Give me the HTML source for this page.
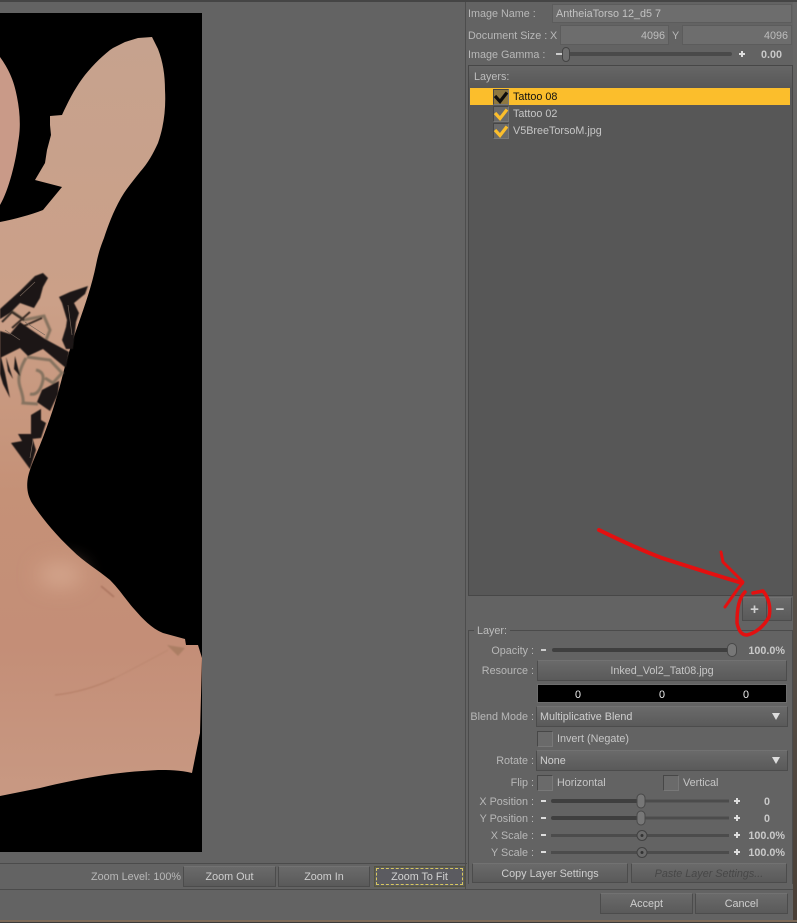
<!DOCTYPE html>
<html><head><meta charset="utf-8"><style>
html,body{margin:0;padding:0;background:#636363;}
#r{position:relative;width:797px;height:923px;overflow:hidden;background:#636363;font:10.8px/16px "Liberation Sans",sans-serif;color:#c6c6c6;}
#r div{position:absolute;box-sizing:border-box;white-space:nowrap;}
#r div.l,#r div.v,#r div.t{margin-top:1px;}
.l{text-align:right;color:#b8b8b8;}
.f{background:#6d6d6d;border:1px solid #5c5c5c;color:#bdbdbd;padding-top:1px;}
.b{background:linear-gradient(#6a6a6a,#5a5a5a);border:1px solid #4c4c4c;border-top-color:#727272;text-align:center;color:#cfcfcf;padding-top:1px;}
.d{background:linear-gradient(#6a6a6a,#5a5a5a);border:1px solid #4c4c4c;border-top-color:#727272;padding-left:3px;color:#cfcfcf;padding-top:1px;}
.c{width:16px;height:16px;background:#6a6a6a;border:1px solid #474747;border-right-color:#787878;border-bottom-color:#787878;}
.v{text-align:right;font-weight:bold;color:#c9c9c9;}
</style></head><body><div id="r">
<div style="left:0;top:0;width:797px;height:2px;background:#454545"></div>
<div style="left:0;top:13px;width:202px;height:839px;background:#000"></div>
<svg style="position:absolute;left:0;top:0" width="210" height="860" viewBox="0 0 210 860">
<defs>
<linearGradient id="g" gradientUnits="userSpaceOnUse" x1="0" y1="30" x2="0" y2="800"><stop offset="0" stop-color="#c6a28e"/><stop offset=".35" stop-color="#cba088"/><stop offset=".6" stop-color="#c59177"/><stop offset=".8" stop-color="#c48e77"/><stop offset="1" stop-color="#c89983"/></linearGradient>
<filter id="bl" x="-100%" y="-100%" width="300%" height="300%"><feGaussianBlur stdDeviation="10"/></filter>
<filter id="b1" x="-50%" y="-50%" width="200%" height="200%"><feGaussianBlur stdDeviation=".9"/></filter>
<filter id="b5" x="-10%" y="-10%" width="120%" height="120%"><feGaussianBlur stdDeviation=".5"/></filter>
</defs>
<path fill="url(#g)" d="M152 37L158 49C163 62 165 75 165 90C166 108 164 126 158 143C153 154 148 163 140 172C133 181 126 189 121 198C113 212 108 226 104 238C100 248 98 255 96 265C92 285 85 305 78 325C72 342 67 358 62 378C57 398 50 420 40 445C35 457 30 468 28 477C26 488 28 496 32 503C42 518 55 534 72 550C84 562 98 570 110 580C120 590 126 600 135 610C143 619 151 628 163 633L185 639L186 645L198 645L202 658L200 733L192 773C180 770 168 770 158 770C140 771 125 772 105 775C85 778 60 783 40 788L0 796V222C15 219 30 215 43 210L62 187L35 180L45 163L47 150L51 135L50 125L50 116L62 115C68 102 74 90 82 79C90 68 100 58 110 50L113 48L125 42L138 38Z"/>
<path fill="#c99a88" d="M0 57C8 68 14 80 17 97C20 112 21 128 18 143C16 160 9 190 0 205Z"/>
<ellipse cx="60" cy="575" rx="22" ry="12" fill="#d4a68d" filter="url(#bl)"/>
<path d="M55 695Q85 692 115 678" fill="none" stroke="#b47e66" stroke-width="1.200" filter="url(#b1)"/>
<path d="M115 678Q135 668 168 650" fill="none" stroke="#bb8770" stroke-width="1" filter="url(#b1)"/>
<path d="M101 586L114 597" stroke="#ac7660" stroke-width="1.800" filter="url(#b1)"/>
<path d="M167 645L185 648L178 656Z" fill="#ab7e64" filter="url(#b1)"/>
<g fill="none" stroke="#85725f" stroke-width="3" filter="url(#b1)">
<path d="M10 310L24 320L44 316L50 330L46 340"/>
<path d="M27 357L50 360L62 373L53 383L45 378"/>
<path d="M26 358Q16 375 20 387T23 403L38 404"/>
<path d="M36 370Q46 372 42 384T30 394"/>
</g>
<path d="M2 322L12 312L24 320M12 328L30 312M24 326L42 318" stroke="#3a2e28" stroke-width="2" fill="none" filter="url(#b5)"/>
<g fill="#1b1614" filter="url(#b5)">
<path d="M0 309L20 291L35 276L43 273L48 278L43 287L40 298L34 308L20 303L10 313L0 319Z"/>
<path d="M59 297L70 292L88 286L85 294L74 303L79 313L76 322L73 349L66 349L62 340L66 327L67 320L62 303Z"/>
<path d="M0 331L10 334L20 322L30 329L45 339L69 352L66 368L55 359L43 349L28 356L20 348L10 353L0 358Z"/>
<path d="M0 353L5 373L10 398L3 384L0 374Z"/>
<path d="M6 357L13 379L8 371Z"/>
<path d="M15 356L20 376L14 369Z"/>
<path d="M42 390L59 381L58 394L50 411L37 402Z"/>
<path d="M31 415L41 409L41 420L46 423L41 438L31 439Z"/>
<path d="M18 434L31 434L36 450L30 469L11 443L22 441Z"/>
</g>
<path d="M5 330L20 340M25 322L45 335M20 296L35 282M68 305L72 335M33 440L30 458" stroke="#75655a" stroke-width=".7" fill="none"/>
</svg>
<div style="left:0;top:863px;width:467px;height:1px;background:#4b4b4b"></div>
<div style="left:0;top:889px;width:467px;height:1px;background:#4b4b4b"></div>
<div style="left:465px;top:2px;width:1px;height:887px;background:#4d4d4d"></div>
<div class="l" style="left:91px;top:868px;width:90px">Zoom Level: 100%</div>
<div class="b" style="left:183px;top:866px;width:93px;height:21px;line-height:19px">Zoom Out</div>
<div class="b" style="left:278px;top:866px;width:92px;height:21px;line-height:19px">Zoom In</div>
<div class="b" style="left:374px;top:866px;width:91px;height:21px;background:#5b5b60;border-color:#55553f"></div>
<div style="left:376px;top:868px;width:87px;height:17px;border:1px dashed #d8c860;text-align:center;line-height:17px;color:#d2d2d2">Zoom To Fit</div>
<div class="l" style="left:468px;top:5px;text-align:left">Image Name :</div>
<div class="f" style="left:552px;top:4px;width:240px;height:19px;line-height:17px;padding-left:3px;color:#c2c2c2">AntheiaTorso 12_d5 7</div>
<div class="l" style="left:468px;top:27px;text-align:left">Document Size :</div>
<div class="l" style="left:550px;top:27px;text-align:left">X</div>
<div class="f" style="left:560px;top:25px;width:109px;height:20px;line-height:18px;text-align:right;padding-right:3px">4096</div>
<div class="l" style="left:672px;top:27px;text-align:left">Y</div>
<div class="f" style="left:682px;top:25px;width:110px;height:20px;line-height:18px;text-align:right;padding-right:3px">4096</div>
<div class="l" style="left:468px;top:46px;text-align:left">Image Gamma :</div>
<div style="left:556px;top:53px;width:6px;height:2px;background:#ccc"></div>
<div style="left:562px;top:52px;width:170px;height:4px;background:#4a4a4a;border-radius:2px"></div>
<div style="left:562px;top:47px;width:8px;height:15px;background:#6e6e6e;border:1px solid #444;border-radius:4px"></div>
<div style="left:739px;top:53px;width:6px;height:2px;background:#ddd"></div>
<div style="left:741px;top:51px;width:2px;height:6px;background:#ddd"></div>
<div class="v" style="left:740px;top:46px;width:42px">0.00</div>
<div style="left:468px;top:65px;width:325px;height:531px;background:#575757;border:1px solid #474747"></div>
<div style="left:469px;top:66px;width:323px;height:21px;background:linear-gradient(#666,#585858);line-height:22px;padding-left:5px;color:#bdbdbd">Layers:</div>
<div style="left:470px;top:88px;width:320px;height:17px;background:#fbbe2c"></div>
<div class="t" style="left:513px;top:88px;color:#111">Tattoo 08</div>
<div class="t" style="left:513px;top:105px;color:#c6c6c6">Tattoo 02</div>
<div class="t" style="left:513px;top:122px;color:#c6c6c6">V5BreeTorsoM.jpg</div>
<div class="c" style="left:493px;top:89px;background:#8d7740"></div>
<div class="c" style="left:493px;top:106px"></div>
<div class="c" style="left:493px;top:123px"></div>
<svg style="position:absolute;left:490px;top:86px" width="24" height="54" viewBox="0 0 24 54" fill="none" stroke-width="3.200">
<path d="M5 10L10 15.500L17 6.500" stroke="#0d0d0d"/><path d="M5 27L10 32.500L17 23.500" stroke="#fbbe2c"/><path d="M5 44L10 49.500L17 40.500" stroke="#fbbe2c"/>
</svg>
<div class="b" style="left:742px;top:597px;width:25px;height:24px;line-height:22px;font-size:15px;font-weight:bold">+</div>
<div class="b" style="left:768px;top:597px;width:24px;height:24px;line-height:22px;font-size:15px;font-weight:bold">−</div>
<div style="left:468px;top:630px;width:325px;height:254px;border:1px solid #4b4b4b;border-bottom:0"></div>
<div class="t" style="left:474px;top:622px;padding:0 3px;background:#636363;color:#bdbdbd">Layer:</div>
<div class="l" style="left:470px;top:642px;width:64px">Opacity :</div>
<div style="left:541px;top:649px;width:5px;height:2px;background:#ccc"></div>
<div style="left:552px;top:648px;width:180px;height:4px;background:#3f3f3f;border-radius:2px"></div>
<div style="left:727px;top:643px;width:10px;height:14px;background:#777;border:1px solid #484848;border-radius:5px"></div>
<div class="v" style="left:740px;top:642px;width:45px">100.0%</div>
<div class="l" style="left:470px;top:662px;width:64px">Resource :</div>
<div class="b" style="left:537px;top:660px;width:250px;height:21px;line-height:19px;color:#c6c6c6">Inked_Vol2_Tat08.jpg</div>
<div style="left:537px;top:684px;width:250px;height:19px;background:#000;border:1px solid #6e6e6e"></div>
<div class="t" style="left:575px;top:686px;color:#eee">0</div>
<div class="t" style="left:659px;top:686px;color:#eee">0</div>
<div class="t" style="left:743px;top:686px;color:#eee">0</div>
<div class="l" style="left:470px;top:708px;width:64px">Blend Mode :</div>
<div class="d" style="left:536px;top:706px;width:252px;height:21px;line-height:19px">Multiplicative Blend</div>
<div style="left:772px;top:713px;border:4px solid transparent;border-top:7px solid #ddd;border-bottom:0"></div>
<div class="c" style="left:537px;top:731px"></div>
<div class="t" style="left:557px;top:730px">Invert (Negate)</div>
<div class="l" style="left:470px;top:752px;width:64px">Rotate :</div>
<div class="d" style="left:536px;top:750px;width:252px;height:21px;line-height:19px">None</div>
<div style="left:772px;top:757px;border:4px solid transparent;border-top:7px solid #ddd;border-bottom:0"></div>
<div class="l" style="left:470px;top:774px;width:64px">Flip :</div>
<div class="c" style="left:537px;top:775px"></div>
<div class="t" style="left:557px;top:774px">Horizontal</div>
<div class="c" style="left:663px;top:775px"></div>
<div class="t" style="left:683px;top:774px">Vertical</div>
<div class="l" style="left:470px;top:793px;width:64px">X Position :</div>
<div class="l" style="left:470px;top:810px;width:64px">Y Position :</div>
<div class="l" style="left:470px;top:827px;width:64px">X Scale :</div>
<div class="l" style="left:470px;top:844px;width:64px">Y Scale :</div>
<svg style="position:absolute;left:535px;top:790px" width="210" height="72" viewBox="0 0 210 72">
<g fill="#ddd"><rect x="6" y="10" width="5" height="2"/><rect x="6" y="27" width="5" height="2"/><rect x="6" y="44" width="5" height="2"/><rect x="6" y="61" width="5" height="2"/>
<path d="M199 10h2v-2h2v2h2v2h-2v2h-2v-2h-2zM199 27h2v-2h2v2h2v2h-2v2h-2v-2h-2zM199 44h2v-2h2v2h2v2h-2v2h-2v-2h-2zM199 61h2v-2h2v2h2v2h-2v2h-2v-2h-2z"/></g>
<rect x="16" y="9" width="90" height="4" rx="2" fill="#3f3f3f"/><rect x="106" y="9.500" width="88" height="3" fill="#4c4c4c"/>
<rect x="16" y="26" width="90" height="4" rx="2" fill="#3f3f3f"/><rect x="106" y="26.500" width="88" height="3" fill="#4c4c4c"/>
<rect x="16" y="44" width="178" height="3" fill="#4c4c4c"/><rect x="16" y="61" width="178" height="3" fill="#4c4c4c"/>
<rect x="102" y="4" width="8" height="14" rx="4" fill="#777" stroke="#484848"/><rect x="102" y="21" width="8" height="14" rx="4" fill="#777" stroke="#484848"/>
<circle cx="107" cy="45.500" r="5" fill="#6a6a6a" stroke="#404040"/><circle cx="107" cy="45.500" r="1.500" fill="#333"/>
<circle cx="107" cy="62.500" r="5" fill="#6a6a6a" stroke="#404040"/><circle cx="107" cy="62.500" r="1.500" fill="#333"/>
</svg>
<div class="v" style="left:740px;top:793px;width:30px;text-align:right">0</div>
<div class="v" style="left:740px;top:810px;width:30px">0</div>
<div class="v" style="left:740px;top:827px;width:45px">100.0%</div>
<div class="v" style="left:740px;top:844px;width:45px">100.0%</div>
<div class="b" style="left:472px;top:863px;width:156px;height:20px;line-height:18px">Copy Layer Settings</div>
<div class="b" style="left:631px;top:863px;width:156px;height:20px;line-height:18px;color:#474747;font-style:italic">Paste Layer Settings...</div>
<div style="left:467px;top:889px;width:330px;height:1px;background:#4b4b4b"></div>
<div class="b" style="left:600px;top:893px;width:93px;height:21px;line-height:19px">Accept</div>
<div class="b" style="left:695px;top:893px;width:93px;height:21px;line-height:19px">Cancel</div>
<div style="left:0;top:920px;width:797px;height:2px;background:#7d6a58"></div>
<div style="left:0;top:922px;width:797px;height:1px;background:#3a3a3a"></div>
<div style="left:793px;top:2px;width:4px;height:918px;background:linear-gradient(#686868,#5c5751 50%,#4a3f36)"></div>
<svg style="position:absolute;left:590px;top:520px" width="207" height="130" viewBox="0 0 207 130" fill="none" stroke="#e31010" stroke-linecap="round" stroke-linejoin="round">
<path stroke-width="4" d="M9 10C30 20 50 30 72 38C100 47 125 55 152 63"/>
<path stroke-width="3" d="M131 32L133 42L143 52L153 62L147 70L135 87"/>
<path stroke-width="3.500" d="M155 72C149 78 147 88 147 103C149 112 152 115 157 115C166 113 174 106 179 97C181 88 179 78 173 71L163 73"/>
</svg>
</div></body></html>
